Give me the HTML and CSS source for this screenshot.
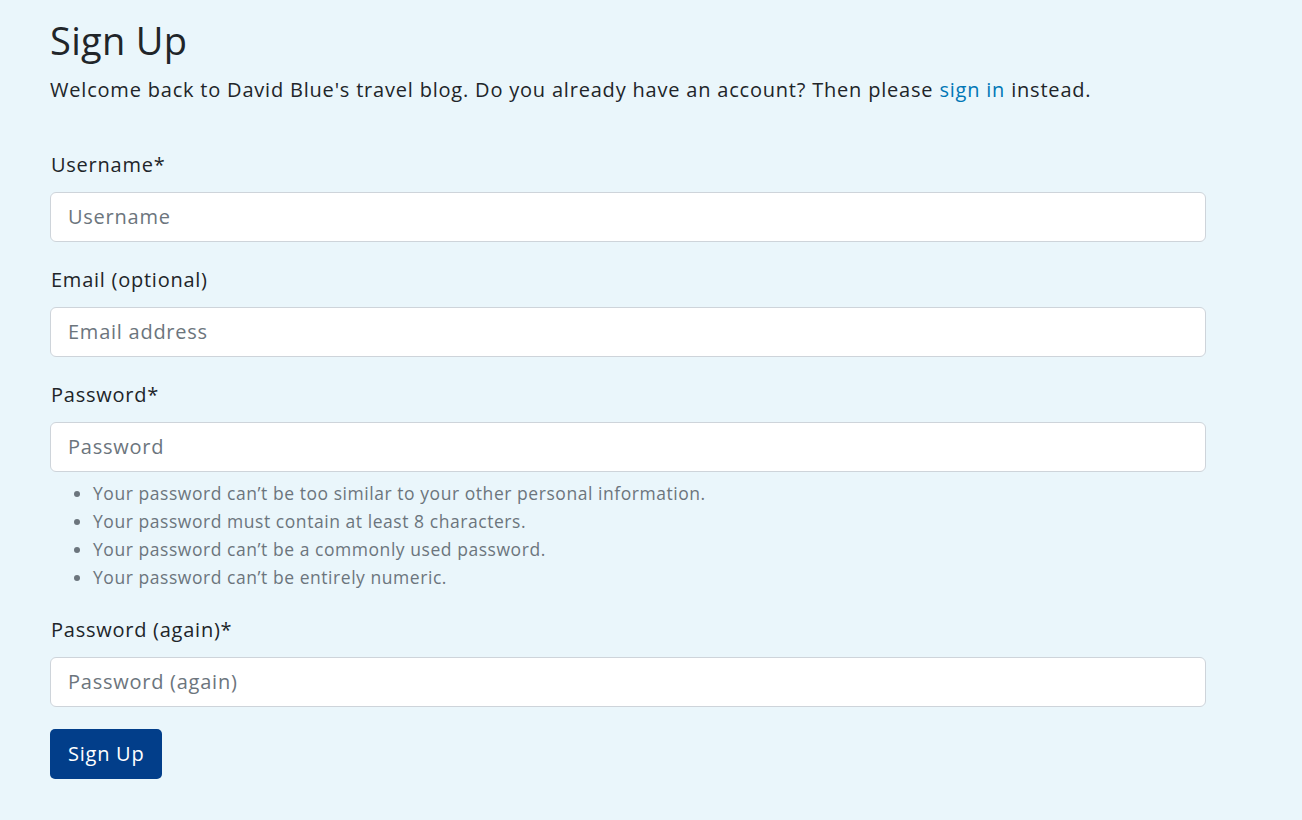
FILE: index.html
```
<!DOCTYPE html>
<html lang="en">
<head>
<meta charset="utf-8">
<title>Sign Up</title>
<link rel="stylesheet" href="styles.css">
</head>
<body>
<main class="page">
  <h1 class="title">Sign Up</h1>
  <p class="lead">Welcome back to David Blue's travel blog. Do you already have an account? Then please <a href="#" class="link">sign in</a> instead.</p>
  <form class="form">
    <div class="field">
      <label class="label" for="u">Username*</label>
      <input class="input" id="u" type="text" placeholder="Username">
    </div>
    <div class="field">
      <label class="label" for="e">Email (optional)</label>
      <input class="input" id="e" type="email" placeholder="Email address">
    </div>
    <div class="field">
      <label class="label" for="p1">Password*</label>
      <input class="input" id="p1" type="password" placeholder="Password">
      <ul class="help">
        <li>Your password can’t be too similar to your other personal information.</li>
        <li>Your password must contain at least 8 characters.</li>
        <li>Your password can’t be a commonly used password.</li>
        <li>Your password can’t be entirely numeric.</li>
      </ul>
    </div>
    <div class="field last">
      <label class="label" for="p2">Password (again)*</label>
      <input class="input" id="p2" type="password" placeholder="Password (again)">
    </div>
    <button class="btn" type="button">Sign Up</button>
  </form>
</main>
</body>
</html>
```
FILE: styles.css
```
* { box-sizing: border-box; }
html, body { margin: 0; height: 100%; }
body {
  background: #eaf6fb;
  color: #212529;
  font-family: "Open Sans", "Noto Sans", sans-serif;
  font-size: 20px;
  line-height: 1.5;
  letter-spacing: 0.75px;
}
.page {
  width: 1156px;
  margin-left: 50px;
  padding-top: 18px;
}
.title {
  margin: 0 0 11px;
  font-size: 38px;
  font-weight: 400;
  line-height: 1.2;
  letter-spacing: 0.3px;
}
.lead {
  margin: 0 0 45px;
  font-size: 20px;
  line-height: 30px;
  letter-spacing: 0.8px;
}
.link { color: #0077b6; text-decoration: none; }
.form { display: flex; flex-direction: column; }
.field { display: flex; flex-direction: column; margin-bottom: 23px; }
.field.last { margin-bottom: 22px; }
.label {
  font-size: 20px;
  line-height: 30px;
  margin-bottom: 12px;
  padding-left: 1px;
}
.input {
  height: 50px;
  width: 100%;
  border: 1px solid #ced4da;
  border-radius: 6px;
  background: #fff;
  padding: 0 17px;
  font: inherit;
  font-size: 20px;
  letter-spacing: 0.75px;
  color: #212529;
}
.input::placeholder { color: #6c757d; opacity: 1; }
.help {
  margin: 7px 0 0;
  padding-left: 43px;
  color: #6c757d;
  font-size: 17.5px;
  line-height: 28.3px;
  letter-spacing: 0.55px;
}
.btn {
  align-self: flex-start;
  height: 50px;
  padding: 0 18px;
  border: 0;
  border-radius: 5px;
  background: #023e8a;
  color: #fff;
  font: inherit;
  font-size: 20px;
  letter-spacing: 0.75px;
}
```
